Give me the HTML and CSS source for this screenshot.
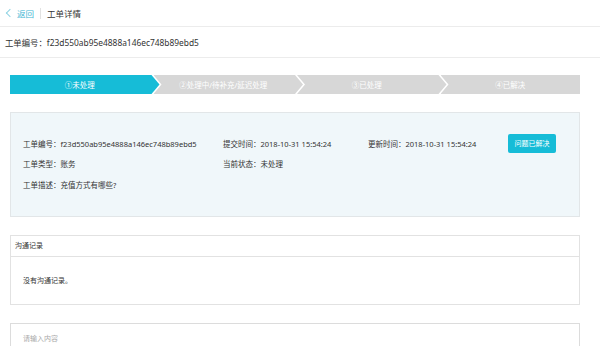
FILE: index.html
```html
<!DOCTYPE html>
<html lang="zh-CN">

<head>
    <meta charset="UTF-8">
    <meta name="viewport" content="width=device-width, initial-scale=1.0">
    <title>工单详情</title>
    <link rel="stylesheet" href="styles.css">
</head>

<body>
    <div class="top-bar">
        <a href="#" class="back-link"><span class="back-arrow"></span>返回</a>
        <span class="divider"></span>
        <span class="page-title">工单详情</span>
    </div>

    <div class="order-no">工单编号：f23d550ab95e4888a146ec748b89ebd5</div>

    <div class="main">
        <div class="steps">
            <div class="step active">①未处理</div>
            <div class="step">②处理中/待补充/延迟处理</div>
            <div class="step">③已处理</div>
            <div class="step last">④已解决</div>
        </div>

        <div class="info-card">
            <div class="info-grid">
                <div class="info-item">工单编号：f23d550ab95e4888a146ec748b89ebd5</div>
                <div class="info-item">提交时间：2018-10-31 15:54:24</div>
                <div class="info-item">更新时间：2018-10-31 15:54:24</div>
                <div class="info-action"><button type="button" class="solve-btn">问题已解决</button></div>

                <div class="info-item">工单类型：账务</div>
                <div class="info-item">当前状态：未处理</div>
                <div class="info-item"></div>
                <div></div>

                <div class="info-item">工单描述：充值方式有哪些?</div>
            </div>
        </div>

        <div class="panel">
            <div class="panel-head">沟通记录</div>
            <div class="panel-body">没有沟通记录。</div>
        </div>

        <div class="reply-box">
            <textarea class="reply-input" placeholder="请输入内容"></textarea>
        </div>
    </div>
</body>

</html>
```

FILE: styles.css
```css
html,
body {
    height: 100%;
}

body {
    font-family: 'Noto Sans', 'Noto Sans CJK SC', sans-serif;
    color: #333;
    background-color: #fff;
    margin: 0;
    padding: 0;
    overflow: hidden;
}

.top-bar {
    height: 26px;
    display: flex;
    align-items: center;
    padding-left: 6px;
    border-bottom: 1px solid #ececec;
    font-size: 8.5px;
}

.back-link {
    color: #3fb6d3; /* light cyan link */
    text-decoration: none;
    display: flex;
    align-items: center;
}

.back-arrow {
    width: 5px;
    height: 5px;
    border-left: 1px solid #8fd3e3;
    border-bottom: 1px solid #8fd3e3;
    transform: rotate(45deg);
    margin-right: 4px;
    margin-left: 1px;
}

.divider {
    width: 1px;
    height: 11px;
    background-color: #e2e2e2;
    margin: 0 6px 0 6px;
}

.page-title {
    color: #333;
}

.order-no {
    height: 30px;
    line-height: 32px;
    padding-left: 5px;
    font-size: 8.4px;
    border-bottom: 1px solid #ececec;
}

.main {
    width: 570px;
    padding: 17px 0 0 10px;
}

/* step arrows */
.steps {
    display: flex;
    height: 19px;
}

.step {
    flex: 1;
    background-color: #d7d7d7;
    color: #fff;
    font-size: 7.5px;
    display: flex;
    align-items: center;
    justify-content: center;
    padding-right: 10px;
    margin-left: -6px;
    clip-path: polygon(0 0, calc(100% - 8px) 0, 100% 50%, calc(100% - 8px) 100%, 0 100%, 8px 50%);
}

.step.active {
    background-color: #16bcd7;
    margin-left: 0;
    clip-path: polygon(0 0, calc(100% - 8px) 0, 100% 50%, calc(100% - 8px) 100%, 0 100%);
}

.step.last {
    padding-right: 0;
    clip-path: polygon(0 0, 100% 0, 100% 100%, 0 100%, 8px 50%);
}

/* info card */
.info-card {
    margin-top: 18px;
    background-color: #f0f7fa;
    border: 1px solid #e2e6e8;
    padding: 20px 0 0 12px;
    box-sizing: border-box;
    height: 105px;
}

.info-grid {
    display: grid;
    grid-template-columns: 200px 145px 140px auto;
    grid-auto-rows: 20.5px;
    align-items: center;
    font-size: 7.5px;
}

.solve-btn {
    background-color: #16bcd7;
    color: #fff;
    border: none;
    border-radius: 2px;
    font-family: inherit;
    font-size: 7px;
    width: 48px;
    height: 19px;
    padding: 0;
    cursor: pointer;
}

/* communication panel */
.panel {
    margin-top: 18px;
    border: 1px solid #e2e2e2;
    height: 70px;
    box-sizing: border-box;
}

.panel-head {
    height: 20px;
    line-height: 20px;
    padding-left: 4px;
    font-size: 7px;
    border-bottom: 1px solid #e2e2e2;
}

.panel-body {
    padding: 18px 0 0 12px;
    font-size: 7px;
}

.reply-box {
    margin-top: 18px;
}

.reply-input {
    display: block;
    width: 100%;
    height: 40px;
    box-sizing: border-box;
    border: 1px solid #dcdcdc;
    padding: 9px 12px;
    font-family: inherit;
    font-size: 7px;
    resize: none;
    outline: none;
}

.reply-input::placeholder {
    color: #aaa;
}
```
